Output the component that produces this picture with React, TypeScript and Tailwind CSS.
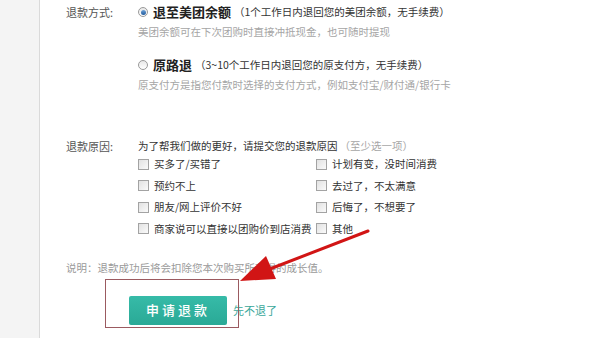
import React from 'react';

const font = { fontFamily: '"Noto Sans CJK SC", "Noto Sans", sans-serif' };

function Radio({ checked }: { checked?: boolean }) {
  return (
    <span className="flex h-[10px] w-[10px] shrink-0 items-center justify-center rounded-full border border-[#9a9a9a] bg-gradient-to-b from-[#e8e8e8] to-[#ffffff]">
      {checked && (
        <span className="h-[5px] w-[5px] rounded-full bg-gradient-to-b from-[#6fa3d8] to-[#1f5a9c]" />
      )}
    </span>
  );
}

function Check({ label }: { label: string }) {
  return (
    <label className="flex items-center gap-[5px]">
      <span className="h-[11px] w-[11px] shrink-0 border border-[#a3a3a3] bg-gradient-to-br from-[#e2e2e2] to-[#fafafa]" />
      <span className="text-[10.5px] leading-[12px] text-[#333]">{label}</span>
    </label>
  );
}

export default function App() {
  const reasons: [string, string][] = [
    ['买多了/买错了', '计划有变，没时间消费'],
    ['预约不上', '去过了，不太满意'],
    ['朋友/网上评价不好', '后悔了，不想要了'],
    ['商家说可以直接以团购价到店消费', '其他'],
  ];

  return (
    <div className="relative flex h-[338px] w-[600px] overflow-hidden bg-white" style={font}>
      <div className="w-[40px] shrink-0 border-r border-[#dadada] bg-[#f4f4f4]" />

      <div className="flex flex-1 flex-col pl-[26px] pt-[3px]">
        {/* refund method */}
        <div className="flex">
          <div className="w-[72px] pt-[3px] text-[11px] leading-[12px] text-[#555]">退款方式:</div>
          <div className="flex flex-col">
            <div className="flex h-[18px] items-center gap-[5px]">
              <Radio checked />
              <span className="text-[13px] font-bold leading-[18px] text-[#222]">退至美团余额</span>
              <span className="-ml-[2px] text-[10.5px] leading-[18px] text-[#333]">（1个工作日内退回您的美团余额，无手续费）</span>
            </div>
            <div className="mt-[5px] text-[10.5px] leading-[12px] text-[#a5a5a5]">
              美团余额可在下次团购时直接冲抵现金，也可随时提现
            </div>
            <div className="mt-[18px] flex h-[18px] items-center gap-[5px]">
              <Radio />
              <span className="text-[13px] font-bold leading-[18px] text-[#222]">原路退</span>
              <span className="-ml-[2px] text-[10.5px] leading-[18px] text-[#333]">（3~10个工作日内退回您的原支付方，无手续费）</span>
            </div>
            <div className="mt-[5px] text-[10.5px] leading-[12px] text-[#a5a5a5]">
              原支付方是指您付款时选择的支付方式，例如支付宝/财付通/银行卡
            </div>
          </div>
        </div>

        {/* refund reason */}
        <div className="mt-[49px] flex">
          <div className="w-[72px] text-[11px] leading-[12px] text-[#555]">退款原因:</div>
          <div className="flex flex-col">
            <div className="text-[10.5px] leading-[12px] text-[#333]">
              为了帮我们做的更好，请提交您的退款原因
              <span className="ml-[2px] text-[#a5a5a5]">（至少选一项）</span>
            </div>
            <div className="mt-[6px] grid grid-cols-[178px_auto] gap-y-[9.5px]">
              {reasons.map(([a, b]) => (
                <React.Fragment key={a}>
                  <Check label={a} />
                  <Check label={b} />
                </React.Fragment>
              ))}
            </div>
          </div>
        </div>

        <div className="mt-[27px] text-[10.5px] leading-[12px] text-[#9a9a9a]">
          说明：退款成功后将会扣除您本次购买所获得的成长值。
        </div>

        <div className="mt-[22px] flex items-center pl-[63px]">
          <button className="h-[29px] w-[98px] rounded-[2px] bg-gradient-to-b from-[#36bba8] to-[#2aa996] text-[13px] font-medium tracking-[3px] text-white">
            申请退款
          </button>
          <a className="ml-[6px] text-[11px] leading-[12px] text-[#3aa79a]">先不退了</a>
        </div>
      </div>

      {/* annotation: box + arrow */}
      <div className="pointer-events-none absolute left-[105px] top-[279px] h-[49px] w-[134px] border border-[#9b5a60]" />
      <svg className="pointer-events-none absolute left-0 top-0" width="600" height="338" viewBox="0 0 600 338">
        <line x1="368" y1="231" x2="262" y2="272" stroke="#d11515" strokeWidth="3" strokeLinecap="round" />
        <polygon points="240,281 276,279 266,256" fill="#d11515" />
      </svg>
    </div>
  );
}
